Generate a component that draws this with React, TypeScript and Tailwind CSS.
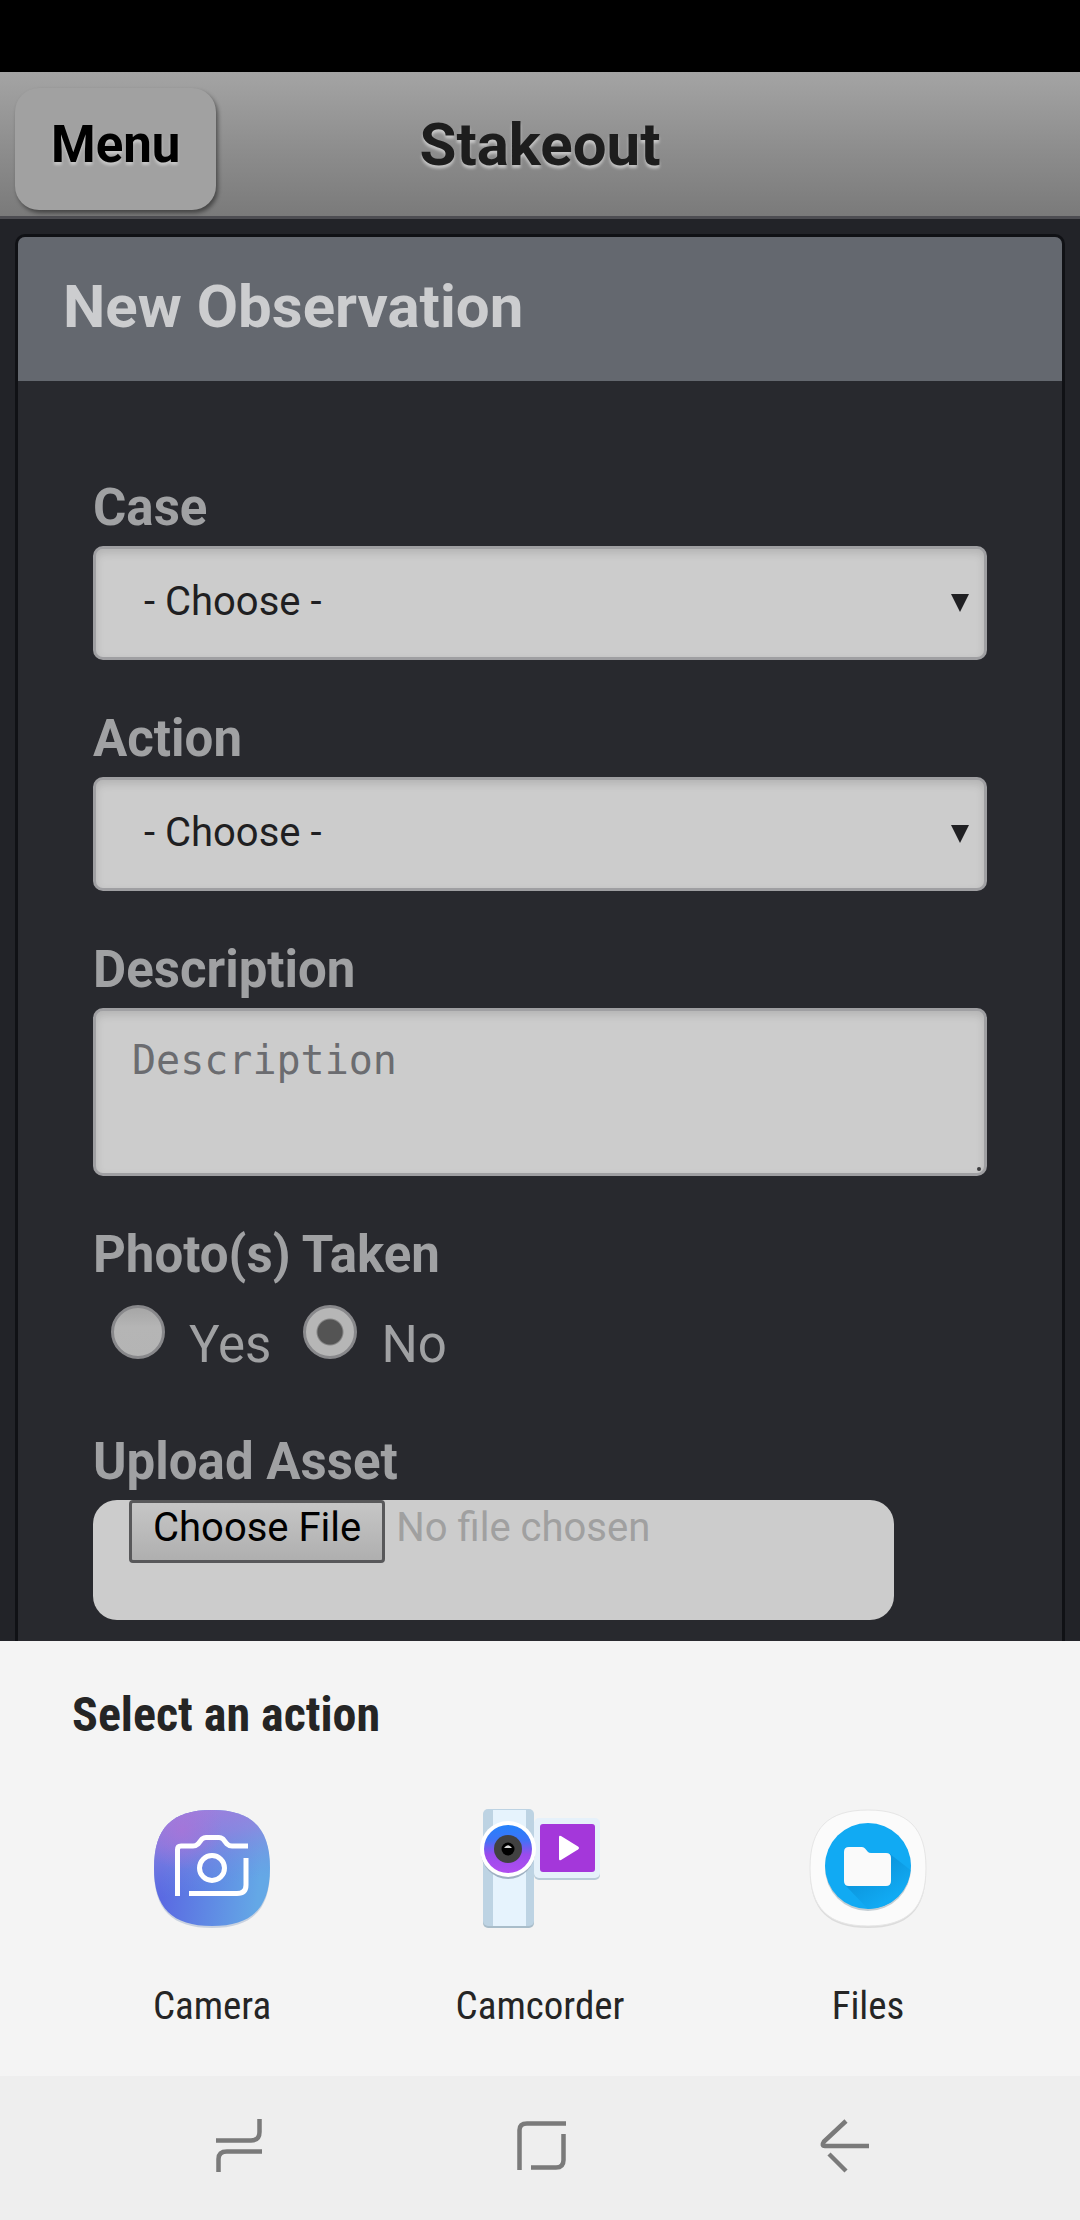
import React from "react";

const ROBOTO = "font-['Roboto','Liberation_Sans',sans-serif]";
const CONDENSED = "font-['Roboto_Condensed','Liberation_Sans_Narrow','Roboto',sans-serif]";

const fieldLabel = "block text-[51px] leading-[76px] font-bold text-[#a0a1a3]";
const fieldBox =
  "block w-full rounded-[10px] border-[3px] border-[#9f9fa2] bg-[#cccccc] shadow-[inset_0_4px_8px_rgba(0,0,0,0.12)] outline-none";

function ChoiceField({ id, label }: { id: string; label: string }) {
  return (
    <div>
      <label htmlFor={id} className={fieldLabel}>
        {label}
      </label>
      <div className="relative">
        <select
          id={id}
          className={`${fieldBox} h-[114px] appearance-none pr-16 pb-[2px] pl-12 text-[40px] text-[#1f1f22]`}
        >
          <option>- Choose -</option>
        </select>
        <svg
          className="pointer-events-none absolute top-12 right-[18px]"
          width="18"
          height="18"
          viewBox="0 0 18 18"
          aria-hidden="true"
        >
          <path d="M0 0H18L9 18Z" fill="#1f1f22" />
        </svg>
      </div>
    </div>
  );
}

function RadioOption({ id, label, checked }: { id: string; label: string; checked?: boolean }) {
  return (
    <div className="flex items-start gap-6">
      <input
        id={id}
        type="radio"
        name="photos"
        defaultChecked={checked}
        className="size-[54px] appearance-none rounded-full border-[3px] border-[#88888b] bg-linear-to-b from-[#a6a6a6] via-[#b5b5b5] via-40% to-[#b4b4b4] checked:bg-[radial-gradient(circle,#545454_12px,#b6b6b6_14px)]"
      />
      <label htmlFor={id} className="pt-[10px] text-[51px] leading-[60px] text-[#a0a1a3]">
        {label}
      </label>
    </div>
  );
}

const SQUIRCLE = "M60 2C100 2 118 20 118 60S100 118 60 118S2 100 2 60S20 2 60 2Z";

function CameraIcon() {
  return (
    <svg width="120" height="120" viewBox="0 0 120 120" fill="none" aria-hidden="true">
      <defs>
        <linearGradient id="cam-base" x1="10" y1="60" x2="108" y2="70" gradientUnits="userSpaceOnUse">
          <stop stopColor="#5a68e2" />
          <stop offset="1" stopColor="#64a8e6" />
        </linearGradient>
        <linearGradient id="cam-top" x1="44" y1="2" x2="60" y2="80" gradientUnits="userSpaceOnUse">
          <stop stopColor="#9c80dd" />
          <stop offset="0.35" stopColor="#9882de" stopOpacity="0.7" />
          <stop offset="1" stopColor="#6d90e2" stopOpacity="0" />
        </linearGradient>
        <radialGradient id="cam-glow" cx="30" cy="22" r="40" gradientUnits="userSpaceOnUse">
          <stop stopColor="#a874d8" stopOpacity="0.8" />
          <stop offset="1" stopColor="#a874d8" stopOpacity="0" />
        </radialGradient>
      </defs>
      <path d={SQUIRCLE} transform="translate(0 2)" fill="#c9d2e0" />
      <path d={SQUIRCLE} fill="url(#cam-base)" />
      <path d={SQUIRCLE} fill="url(#cam-top)" />
      <path d={SQUIRCLE} fill="url(#cam-glow)" />
      <g stroke="#ffffff" strokeWidth="5">
        <path d="M25.500 88V41.500Q25.500 38 29 38H41Q44 38 46 36L50 31Q52 29.500 54 29.500H67Q69 29.500 71 31L75 36Q77 38 80 38H96" />
        <path d="M94 50V77Q94 85.500 85 85.500H37" />
        <circle cx="60" cy="60" r="12.500" />
      </g>
    </svg>
  );
}

function CamcorderIcon() {
  return (
    <svg width="120" height="120" viewBox="0 0 120 120" fill="none" aria-hidden="true">
      <defs>
        <linearGradient id="lens" x1="0" y1="17" x2="0" y2="66" gradientUnits="userSpaceOnUse">
          <stop stopColor="#2482fb" />
          <stop offset="0.3" stopColor="#3d74f7" />
          <stop offset="0.6" stopColor="#9a4bec" />
          <stop offset="1" stopColor="#b24df0" />
        </linearGradient>
      </defs>
      <rect x="3" y="3" width="51" height="117" rx="5" fill="#a9bdca" />
      <rect x="3" y="1" width="51" height="117" rx="5" fill="#bdd3e3" />
      <rect x="13" y="2" width="33" height="116" fill="#e6f3fd" />
      <rect x="54" y="12" width="66" height="60" rx="5" fill="#b9cbd8" />
      <rect x="54" y="10" width="66" height="60" rx="5" fill="#e6f1fa" />
      <rect x="60" y="16" width="55" height="48" rx="3" fill="#a437da" />
      <path d="M79 29Q79 27 81 28L98 38.500Q100 40 98 41.500L81 52Q79 53 79 51Z" fill="#ffffff" />
      <circle cx="28" cy="44" r="27" fill="#9fb0c2" />
      <circle cx="28" cy="41" r="28" fill="#ffffff" />
      <circle cx="28" cy="41" r="24" fill="url(#lens)" />
      <circle cx="28" cy="41" r="14" fill="#414141" />
      <circle cx="28" cy="41" r="6.500" fill="#000000" />
      <path d="M24 40Q28 34.500 32 40Z" fill="#d8d8d8" />
    </svg>
  );
}

function FilesIcon() {
  return (
    <svg width="120" height="120" viewBox="0 0 120 120" fill="none" aria-hidden="true">
      <defs>
        <linearGradient id="folder-shade" x1="52" y1="62" x2="74" y2="96" gradientUnits="userSpaceOnUse">
          <stop stopColor="#0b93da" />
          <stop offset="1" stopColor="#11aaf3" />
        </linearGradient>
      </defs>
      <path d={SQUIRCLE} transform="translate(0 2)" fill="#dcdcdc" />
      <path d={SQUIRCLE} fill="#fbfbfb" stroke="#e6e6e6" />
      <circle cx="60" cy="60" r="43" fill="#c3cdd3" />
      <circle cx="60" cy="58" r="43" fill="#11aaf3" />
      <path d="M82 46L102.500 62A43 43 0 0 1 60 101L38 78Z" fill="url(#folder-shade)" />
      <path
        d="M41 39H54Q56 39 57 40.500L60 44Q61 45 63 45H78Q83 45 83 50V73Q83 78 78 78H41Q36 78 36 73V44Q36 39 41 39Z"
        fill="#fafafa"
      />
    </svg>
  );
}

const apps = [
  { name: "Camera", Icon: CameraIcon },
  { name: "Camcorder", Icon: CamcorderIcon },
  { name: "Files", Icon: FilesIcon },
];

const navKeys = [
  {
    name: "Recent apps",
    paths: ["M7 21.500H42Q50.500 21.500 50.500 13V0", "M9.500 53V40Q9.500 32.500 18 32.500H53"],
  },
  {
    name: "Home",
    paths: ["M8.500 51V11Q8.500 4.500 16 4.500H55", "M52.500 15V41Q52.500 48.500 45 48.500H20"],
  },
  {
    name: "Back",
    paths: ["M33 2L11 22.500Q8 27 12 27H56", "M16 35L33 52"],
  },
];

export default function App() {
  return (
    <div className={`flex min-h-screen flex-col bg-[#222328] ${ROBOTO}`}>
      <div className="h-[72px] bg-black" />

      <header className="grid grid-cols-[1fr_auto_1fr] items-center border-b-[3px] border-[#4d4d52] bg-linear-to-b from-[#a4a4a4] to-[#7a7a7a] px-[15px] pt-4 pb-[6px]">
        <button
          type="button"
          className="h-[122px] justify-self-start rounded-[24px] bg-[#a1a1a1] px-9 pb-[8px] text-[51px] font-bold text-black shadow-[2px_3px_4px_rgba(0,0,0,0.45)] [text-shadow:0_3px_3px_rgba(255,255,255,0.4)]"
        >
          Menu
        </button>
        <h1 className="pb-2 text-[60px] leading-[72px] font-bold text-[#1d1d1d] [text-shadow:0_3px_3px_rgba(255,255,255,0.5)]">
          Stakeout
        </h1>
      </header>

      <main className="flex flex-1 flex-col px-[15px] pt-[15px]">
        <section className="flex flex-1 flex-col overflow-hidden rounded-t-[10px] border-x-[3px] border-t-[3px] border-[#101115] bg-[#28292e]">
          <h2 className="bg-[#64686f] px-[45px] pt-[30px] pb-[34px] text-[60px] leading-[80px] font-bold text-[#cccdcf]">
            New Observation
          </h2>

          <form className="flex flex-col gap-[41px] px-[75px] pt-[89px] pb-[21px]">
            <ChoiceField id="case" label="Case" />
            <ChoiceField id="action" label="Action" />

            <div>
              <label htmlFor="description" className={fieldLabel}>
                Description
              </label>
              <div className="relative">
                <textarea
                  id="description"
                  placeholder="Description"
                  className={`${fieldBox} h-[168px] resize-none px-9 py-[25px] font-['DejaVu_Sans_Mono',monospace] text-[40px] leading-[48px] placeholder:text-[#6b6c70]`}
                />
                <span className="absolute right-[6px] bottom-[5px] size-1 rounded-full bg-[#3c3c3e]" />
              </div>
            </div>

            <fieldset>
              <legend className={fieldLabel}>Photo(s) Taken</legend>
              <div className="flex gap-8 px-[18px] pt-3 pb-2">
                <RadioOption id="photos-yes" label="Yes" />
                <RadioOption id="photos-no" label="No" checked />
              </div>
            </fieldset>

            <div>
              <label htmlFor="asset" className={fieldLabel}>
                Upload Asset
              </label>
              <input
                id="asset"
                type="file"
                className="block h-[120px] w-[calc(100%-93px)] rounded-[24px] bg-[#cccccc] px-9 text-[40px] leading-[48px] text-[#a0a0a0] file:mr-[11px] file:h-[63px] file:rounded-[4px] file:border-[3px] file:border-solid file:border-[#58585a] file:bg-linear-to-b file:from-[#c6c6c6] file:to-[#afafaf] file:px-[21px] file:pb-2 file:leading-[48px] file:text-black"
              />
            </div>
          </form>
        </section>
      </main>

      <section className={`bg-[#f4f4f4] px-12 pt-[42px] pb-[43px] ${CONDENSED}`}>
        <h2 className="px-6 text-[48px] leading-[64px] font-bold text-[#252525]">Select an action</h2>
        <div className="grid grid-cols-3 pt-[61px]">
          {apps.map(({ name, Icon }) => (
            <button
              key={name}
              type="button"
              className="flex flex-col items-center gap-[51px] text-[39px] leading-[54px] text-[#252525]"
            >
              <Icon />
              <span>{name}</span>
            </button>
          ))}
        </div>
      </section>

      <nav className="grid h-[144px] grid-cols-3 items-center bg-[#eeeeee] px-[87px]">
        {navKeys.map(({ name, paths }) => (
          <button key={name} type="button" aria-label={name} className="flex justify-center">
            <svg width="58" height="58" viewBox="0 0 58 58" fill="none" stroke="#7a7a7a" strokeWidth="4.500" aria-hidden="true">
              {paths.map((d) => (
                <path key={d} d={d} />
              ))}
            </svg>
          </button>
        ))}
      </nav>
    </div>
  );
}
